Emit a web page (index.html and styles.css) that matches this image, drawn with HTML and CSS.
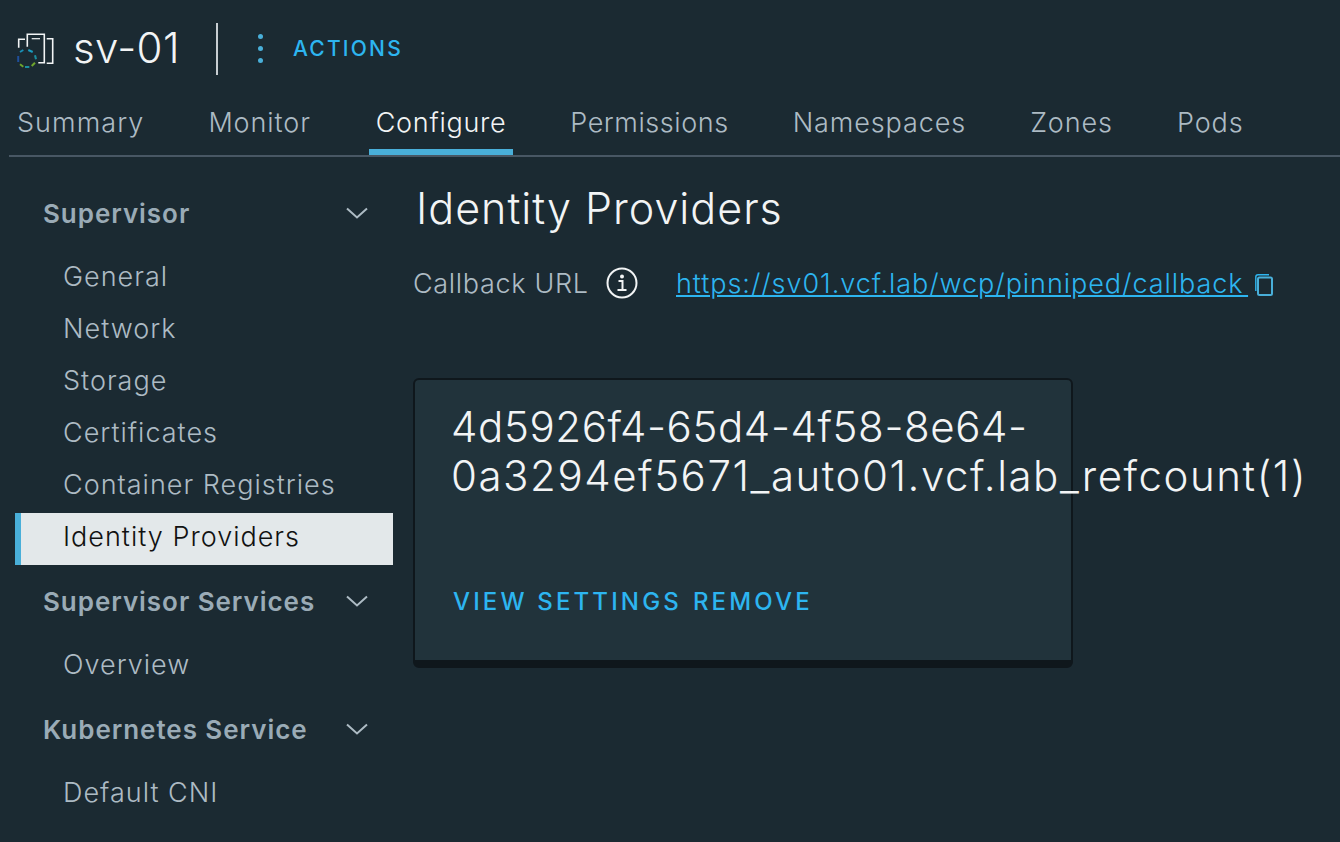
FILE: index.html
```html
<!DOCTYPE html>
<html lang="en">
<head>
<meta charset="utf-8">
<title>sv-01</title>
<link rel="stylesheet" href="styles.css">
</head>
<body>
<header class="head">
  <svg class="logo" width="38" height="38" viewBox="0 0 38 38" fill="none">
    <path d="M1.700 17.700V9.300H8M10.300 16.700V4.300H27.300V32.700H21.300M29.700 8.700H35.700V33.300H29.700" stroke="#f2f4f5" stroke-width="1.600"/>
    <path d="M14.700 8.700H23" stroke="#f2f4f5" stroke-width="1.200"/>
    <path d="M3 22L6.300 20" stroke="#1a8fb5" stroke-width="2"/>
    <path d="M11.300 20L15.700 22" stroke="#1a9cbf" stroke-width="2"/>
    <path d="M18 25.300L19 29.300" stroke="#1a8fa0" stroke-width="2"/>
    <path d="M1.200 26V32" stroke="#1f4f9a" stroke-width="2"/>
    <path d="M3 34.300L6.300 36.700" stroke="#6fa52c" stroke-width="2"/>
    <path d="M8 37H12.300" stroke="#1a8fa0" stroke-width="2"/>
    <path d="M14.700 36L18 32.700" stroke="#6fa52c" stroke-width="2"/>
  </svg>
  <h1 class="name">sv-01</h1>
  <span class="sep"></span>
  <span class="dots"><i></i><i></i><i></i></span>
  <a class="actions">ACTIONS</a>
</header>
<nav class="tabs">
  <a class="tab wide">Summary</a>
  <a class="tab">Monitor</a>
  <a class="tab on">Configure</a>
  <a class="tab narrow">Permissions</a>
  <a class="tab">Namespaces</a>
  <a class="tab">Zones</a>
  <a class="tab">Pods</a>
</nav>
<div class="main">
  <aside class="side">
    <div class="group first">Supervisor<svg class="chev" width="24" height="14" viewBox="0 0 24 14" fill="none"><path d="M2 2.500l10 9 10-9" stroke="#adbbc4" stroke-width="2"/></svg></div>
    <a class="item">General</a>
    <a class="item">Network</a>
    <a class="item">Storage</a>
    <a class="item">Certificates</a>
    <a class="item">Container Registries</a>
    <a class="item sel">Identity Providers</a>
    <div class="group">Supervisor Services<svg class="chev" width="24" height="14" viewBox="0 0 24 14" fill="none"><path d="M2 2.500l10 9 10-9" stroke="#adbbc4" stroke-width="2"/></svg></div>
    <a class="item">Overview</a>
    <div class="group">Kubernetes Service<svg class="chev" width="24" height="14" viewBox="0 0 24 14" fill="none"><path d="M2 2.500l10 9 10-9" stroke="#adbbc4" stroke-width="2"/></svg></div>
    <a class="item">Default CNI</a>
  </aside>
  <main class="content">
    <h2 class="title">Identity Providers</h2>
    <div class="url-row">
      <span class="label">Callback URL</span>
      <svg class="info" width="32" height="32" viewBox="0 0 32 32" fill="none">
        <circle cx="16" cy="16" r="14.500" stroke="#f2f4f5" stroke-width="2"/>
        <circle cx="16" cy="9.500" r="2" fill="#f2f4f5"/>
        <path d="M12.500 14h4v9M11.500 23h9" stroke="#f2f4f5" stroke-width="2"/>
      </svg>
      <a class="url">https://sv01.vcf.lab/wcp/pinniped/callback </a>
      <svg class="copy" width="18" height="22" viewBox="0 0 18 22" fill="none">
        <path d="M.800 17V3C.800 1.700 1.700.800 3 .800H14" stroke="#2db5f0" stroke-width="1.400"/>
        <rect x="3" y="3.500" width="14" height="17.500" rx="1.500" stroke="#49afd9" stroke-width="2"/>
      </svg>
    </div>
    <section class="card">
      <div class="card-title">4d5926f4-65d4-4f58-8e64-0a3294ef5671_auto01.vcf.lab_refcount(1)</div>
      <div class="card-links"><a>VIEW SETTINGS</a><a>REMOVE</a></div>
    </section>
  </main>
</div>
</body>
</html>
```
FILE: styles.css
```css
* { box-sizing: border-box; }
html, body { margin: 0; height: 842px; overflow: hidden; }
body {
  background: #1b2a32;
  font-family: "Inter", "Liberation Sans", sans-serif;
  color: #adbbc4;
}
.head {
  display: flex;
  align-items: center;
  height: 56px;
  margin-top: 20px;
  padding-left: 17px;
}
.logo { flex: none; margin-top: 1px; }
.name {
  margin: 0 0 0 18px;
  font-size: 42px;
  font-weight: 300;
  color: #f2f4f5;
  width: 143px;
  flex: none;
  letter-spacing: .4px;
  line-height: 56px;
}
.sep { width: 2px; height: 52px; margin-top: 2px; background: #c8ced2; flex: none; }
.dots {
  display: flex;
  flex-direction: column;
  gap: 7px;
  margin-left: 40px;
}
.dots i { width: 5px; height: 5px; border-radius: 50%; background: #49afd9; }
.actions {
  margin-left: 30px;
  font-size: 21px;
  letter-spacing: 2.200px;
  color: #2db5f0;
  font-weight: 500;
}
.tabs {
  display: flex;
  gap: 64px;
  height: 81px;
  margin: 0 0 0 9px;
  padding: 0 0 0 8px;
  border-bottom: 2px solid #485764;
  align-items: flex-end;
}
.tab {
  font-size: 27px;
  font-weight: 300;
  letter-spacing: .9px;
  line-height: 32px;
  height: 48px;
  position: relative;
}
.tab.wide { letter-spacing: 1.050px; }
.tab.on { color: #f2f4f5; margin-left: 1px; letter-spacing: .7px; }
.tab.narrow { letter-spacing: .55px; }
.tab.on::after {
  content: "";
  position: absolute;
  left: -7px; right: -7px; bottom: 0;
  height: 6px;
  background: #49afd9;
}
.main { display: flex; }
.side { width: 393px; flex: none; padding-left: 15px; padding-top: 30px; }
.group {
  display: flex;
  align-items: center;
  justify-content: space-between;
  height: 52px;
  margin: 10px 0 14px;
  padding: 0 24px 0 28px;
  font-size: 26px;
  font-weight: 600;
  letter-spacing: .95px;
  color: #9aabb6;
}
.first { margin-top: 0; }
.item {
  display: block;
  height: 52px;
  line-height: 48px;
  padding-left: 48px;
  font-size: 27px;
  font-weight: 300;
  letter-spacing: 1px;
}
.sel {
  background: #e3e8ea;
  color: #111;
  border-left: 6px solid #49afd9;
  padding-left: 42px;
}
.content { flex: 1; min-width: 0; padding: 25px 0 0 20px; }
.title {
  margin: 0 0 0 3px;
  font-size: 43px;
  font-weight: 300;
  letter-spacing: 1px;
  line-height: 52px;
  color: #f2f4f5;
}
.url-row {
  display: flex;
  align-items: center;
  height: 40px;
  margin-top: 29px;
}
.label { font-size: 27px; font-weight: 300; letter-spacing: .67px; width: 193px; flex: none; }
.info { flex: none; }
.url {
  margin-left: 38px;
  font-size: 27px;
  font-weight: 300;
  letter-spacing: .95px;
  word-spacing: -4px;
  color: #2db5f0;
  text-decoration: underline;
  white-space: pre;
}
.copy { flex: none; margin: 4px 0 0 7px; }
.card {
  width: 660px;
  height: 290px;
  margin-top: 75px;
  background: #21333b;
  border: 2px solid #0f171c;
  border-bottom-width: 8px;
  border-radius: 6px;
  padding: 22px 0 0 36px;
  display: flex;
  flex-direction: column;
}
.card-title {
  font-size: 42px;
  font-weight: 300;
  letter-spacing: 1.550px;
  line-height: 49px;
  color: #f2f4f5;
  width: 600px;
}
.card-title::first-line { letter-spacing: .6px; }
.card-links {
  display: flex;
  gap: 11px;
  margin-top: 87px;
  padding-left: 2px;
  font-size: 24px;
  font-weight: 500;
  letter-spacing: 3.150px;
  color: #2db5f0;
  white-space: nowrap;
}
```
